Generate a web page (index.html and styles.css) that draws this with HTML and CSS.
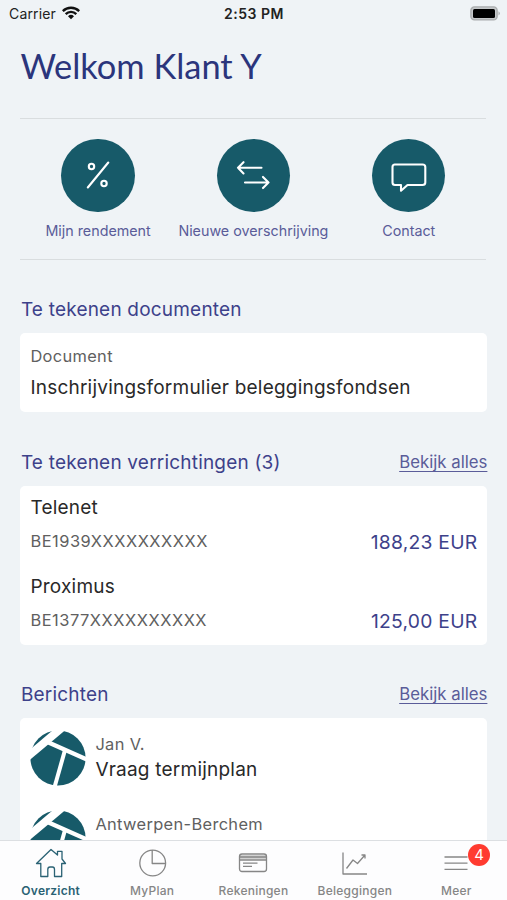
FILE: index.html
```html
<!DOCTYPE html>
<html lang="nl">
<head>
<meta charset="utf-8">
<title>Overzicht</title>
<link rel="stylesheet" href="styles.css">
</head>
<body>
<svg class="defs" aria-hidden="true">
  <symbol id="avatar" viewBox="0 0 56 56">
    <clipPath id="disc"><circle cx="28" cy="28" r="29"/></clipPath>
    <circle cx="28" cy="28" r="27.6" fill="#175a69"/>
    <g clip-path="url(#disc)" stroke="#fff" fill="none">
      <path d="M-4 28L34 -4" stroke-width="8"/>
      <path d="M18 12.300L60 30.800" stroke-width="4.300"/>
      <path d="M35 20L24.300 58" stroke-width="4"/>
    </g>
  </symbol>
</svg>
<div class="screen">
  <header class="status">
    <div class="carrier"><span>Carrier</span>
      <svg width="18" height="14" viewBox="0 0 18 14" fill="none" stroke="#111" stroke-width="2.400"><path d="M.8 5.100a11.600 11.600 0 0 1 16.400 0M3.700 8.100a7.500 7.500 0 0 1 10.600 0"/><path d="M9 13.300L6 10.300a4.300 4.300 0 0 1 6 0z" fill="#111" stroke="none"/></svg>
    </div>
    <div class="clock">2:53 PM</div>
    <svg class="battery" width="31" height="15" viewBox="0 0 31 15"><rect x=".9" y=".9" width="26.200" height="13" rx="3.500" fill="#c5c8ca" stroke="#a9acad" stroke-width="1.400"/><rect x="3" y="3" width="22" height="9" rx="1.500" fill="#000"/><path d="M28.500 5.200q2.600 2.200 0 4.400z" fill="#a9acad"/></svg>
  </header>
  <main>
    <h1>Welkom Klant Y</h1>
    <nav class="actions">
      <a class="action"><span class="disc"><svg width="40" height="40" viewBox="0 0 40 40"><path d="M30.300 7.500L9.800 32.500"/><circle cx="13.500" cy="11.500" r="2.700"/><circle cx="26" cy="28.500" r="2.700"/></svg></span><span>Mijn rendement</span></a>
      <a class="action"><span class="disc"><svg width="40" height="40" viewBox="0 0 40 40"><path d="M5 12.800H28.500M10.500 7.200L5 12.800l5.500 5.600M12 27.500H35.500M30 21.900l5.500 5.600l-5.500 5.600"/></svg></span><span>Nieuwe overschrijving</span></a>
      <a class="action"><span class="disc"><svg width="40" height="40" viewBox="0 0 40 40"><path d="M5.500 9.500H33.500q2.800 0 2.800 2.500V27.500q0 2.500-2.800 2.500H18.500L12 35.700V30H6q-2.500 0-2.500-2.500V12q0-2.500 2.500-2.500z"/></svg></span><span>Contact</span></a>
    </nav>
    <section>
      <div class="head"><h2>Te tekenen documenten</h2></div>
      <div class="card">
        <div class="doc"><div class="label">Document</div><div class="name">Inschrijvingsformulier beleggingsfondsen</div></div>
      </div>
    </section>
    <section>
      <div class="head"><h2>Te tekenen verrichtingen (3)</h2><a class="more">Bekijk alles</a></div>
      <div class="card">
        <div class="order"><div class="name">Telenet</div><div class="row"><span class="label iban">BE1939XXXXXXXXXX</span><span class="amount">188,23 EUR</span></div></div>
        <div class="order"><div class="name">Proximus</div><div class="row"><span class="label iban">BE1377XXXXXXXXXX</span><span class="amount">125,00 EUR</span></div></div>
      </div>
    </section>
    <section class="messages">
      <div class="head"><h2>Berichten</h2><a class="more">Bekijk alles</a></div>
      <div class="card">
        <div class="message"><svg class="avatar"><use href="#avatar"/></svg><div><div class="label">Jan V.</div><div class="name">Vraag termijnplan</div></div></div>
        <div class="message"><svg class="avatar"><use href="#avatar"/></svg><div><div class="label">Antwerpen-Berchem</div></div></div>
      </div>
    </section>
  </main>
  <nav class="tabs">
    <a class="tab active"><svg width="32" height="30" viewBox="0 0 32 30"><path d="M5.800 15.500H1.500L16 1.500L22.500 7V3.300H27V11L30.500 15.500H26.700V28.500H19.500V21.500Q19.500 19 17.500 19H15Q12.800 19 12.800 21.500V28.500H5.800z"/></svg><span>Overzicht</span></a>
    <a class="tab"><svg width="32" height="30" viewBox="0 0 32 30"><circle cx="16.700" cy="15" r="12.900"/><path d="M16.200 2V15.500H29.500"/></svg><span>MyPlan</span></a>
    <a class="tab"><svg width="32" height="30" viewBox="0 0 32 30"><path d="M3 7H29V11.500H3z" fill="#d2d2d2" stroke="none"/><rect x="2.500" y="6" width="27" height="17.500" rx="2.500"/><path d="M2.500 9H29.500M2.500 12H29.500M6 15.200H20.500M6 18.300H15"/></svg><span>Rekeningen</span></a>
    <a class="tab"><svg width="32" height="30" viewBox="0 0 32 30"><path d="M4 4.500V26H28M7.500 20.500L14 12l4.500 3.500L26 7M22.500 7H26v3.500"/></svg><span>Beleggingen</span></a>
    <a class="tab"><svg width="32" height="30" viewBox="0 0 32 30"><path d="M4.500 9H27.500M4.500 15.200H27.500M4.500 21.400H27.500"/></svg><b class="badge">4</b><span>Meer</span></a>
  </nav>
</div>
</body>
</html>
```

FILE: styles.css
```css
* { box-sizing: border-box; }
body { margin: 0; font-family: Inter, sans-serif; background: #eff3f6; }
.defs { display: block; width: 0; height: 0; }
.screen { height: 900px; display: flex; flex-direction: column; overflow: hidden; }
.status { display: grid; grid-template-columns: 1fr auto 1fr; align-items: center; height: 28px; flex: none; padding: 0 6px 2px 9px; color: #222; font-size: 14px; }
.carrier { display: flex; align-items: center; gap: 6px; letter-spacing: .15px; }
.clock { margin-right: 2px; font-weight: 600; font-size: 14px; letter-spacing: .5px; }
.battery { justify-self: end; }
main { flex: 1; min-height: 0; overflow: hidden; padding: 0 19.6px 0 20.4px; }
h1 { margin: 0; height: 90px; padding-top: 14px; font: 400 34.4px/48px Lato, sans-serif; color: #2b357c; }
.actions { display: grid; grid-template-columns: repeat(3, 1fr); height: 142px; margin: 0 1px 0 0; padding-top: 19.5px; border-top: 1px solid #d9dddf; border-bottom: 1px solid #d9dddf; }
.action { display: flex; flex-direction: column; align-items: center; color: #5a5c99; font-size: 14.3px; line-height: 20px; white-space: nowrap; gap: 8.5px; }
.disc { display: flex; align-items: center; justify-content: center; width: 73.5px; height: 73.5px; flex: none; border-radius: 50%; background: #175a69; }
.disc svg { fill: none; stroke: #fff; stroke-width: 2.1; stroke-linecap: round; stroke-linejoin: round; }
section { padding-top: 34px; }
section:first-of-type { padding-top: 33px; }
.head { display: flex; justify-content: space-between; align-items: center; height: 32px; margin-bottom: 8px; padding-left: .5px; }
h2 { margin: 0; font-size: 19px; font-weight: 400; letter-spacing: .2px; color: #3d418a; }
.more { color: #5a5c99; font-size: 16.8px; text-decoration: underline; text-underline-offset: 3px; text-decoration-thickness: 1px; }
.card { background: #fff; border-radius: 5px; padding: 0 10px; }
.doc { height: 79px; padding-top: 9.5px; }
.doc .name { margin-top: 6px; }
.label { font-size: 16.4px; line-height: 26px; letter-spacing: .35px; color: #606060; }
.iban { letter-spacing: .54px; transform: translateY(-.6px); }
.name { font-size: 19px; line-height: 26px; letter-spacing: .22px; color: #292929; white-space: nowrap; }
.order { height: 79.25px; padding-top: 9px; }
.row { display: flex; justify-content: space-between; align-items: center; margin-top: 8px; }
.amount { color: #3d418a; font-size: 19.3px; line-height: 26px; letter-spacing: .25px; }
.messages { padding-top: 33.5px; }
.message { display: flex; gap: 9px; height: 79.5px; padding-top: 12px; }
.avatar { width: 56px; height: 56px; flex: none; }
.message .label, .message .name { line-height: 25px; }
.message .label { padding-top: 2px; }
.tabs { display: grid; grid-template-columns: repeat(5, 1fr); height: 60px; flex: none; background: #fdfdfe; border-top: 1px solid #dcdfe2; }
.tab { position: relative; display: flex; flex-direction: column; align-items: center; padding-top: 7px; color: #868686; font-size: 12px; font-weight: 500; line-height: 16px; letter-spacing: .25px; gap: 5px; }
.tab svg { fill: none; stroke: currentColor; stroke-width: 1.3; stroke-linejoin: round; }
.active { color: #2a6274; }
.active span { font-weight: 600; }
.badge { position: absolute; top: 3px; right: 17px; width: 22px; height: 22px; border-radius: 50%; background: #ff3b30; color: #fff; font-size: 15px; font-weight: 400; line-height: 22px; letter-spacing: 0; text-align: center; }
```
